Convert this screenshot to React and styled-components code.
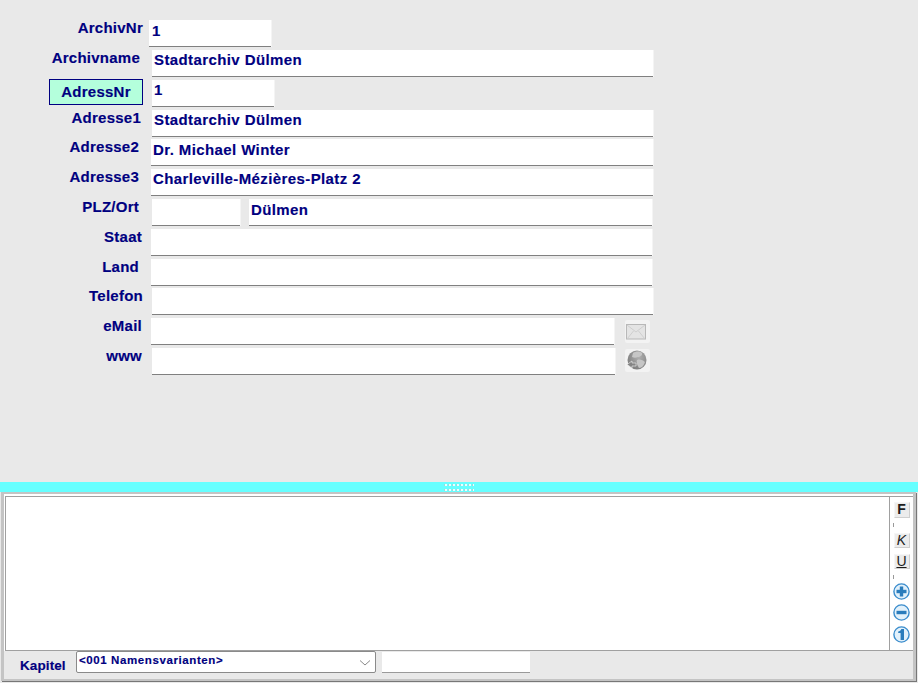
import React from 'react';
import styled, { createGlobalStyle } from 'styled-components';

const Global = createGlobalStyle`
  html, body { margin: 0; padding: 0; background: #e9e9e9; }
  * { box-sizing: border-box; }
`;
const Page = styled.div`
  width: 918px; height: 683px; display: flex; flex-direction: column; overflow: hidden;
  background: #e9e9e9; color: #000080;
  font-family: "Liberation Sans", Arial, sans-serif; font-weight: 700; font-size: 15px; letter-spacing: .25px;
  -webkit-text-stroke: .15px #000080;
`;
const Form = styled.div`
  height: 482px; padding-top: 20px; display: flex; flex-direction: column;
`;
const Row = styled.div`
  display: flex; height: ${p => p.$h}px; flex: none;
`;
const LabelCell = styled.div`
  flex: none; width: ${p => p.$left}px; padding-top: ${p => p.$pt}px;
  text-align: right; line-height: 16px; white-space: nowrap;
`;
const ActiveLabel = styled.div`
  flex: none; width: 94px; height: 26px; margin-left: 49px; margin-right: 9px;
  margin-top: -1px; padding-bottom: 1px; border: 1px solid #000080; background: #b4ffdc;
  display: flex; align-items: center; justify-content: center;
`;
const Field = styled.div`
  flex: none; width: ${p => p.$w}px; height: 27px; margin-left: ${p => p.$ml || 0}px;
  background: #fff; border-bottom: 1px solid #808080; box-shadow: 1px 0 0 #f4f4f4;
  padding: ${p => p.$pt ?? 2}px 0 0 ${p => p.$pl ?? 2}px; line-height: 18px; white-space: nowrap; letter-spacing: .4px;
`;
const IconButton = styled.div`
  flex: none; width: 25px; height: 23px; margin-left: ${p => p.$ml}px; margin-top: ${p => p.$mt}px;
  background: #f3f3f3; border-radius: 2px; display: flex; align-items: center; padding-left: 1px;
`;
const Splitter = styled.div`
  height: 10px; flex: none; background: #66ffff; display: flex; align-items: center; justify-content: center;
`;
const Lower = styled.div`
  height: 189px; flex: none; margin: 0 2px 2px 1px; display: flex; flex-direction: column;
  border: 3px solid #c4c4c4; border-top-width: 2px; border-bottom-width: 2px; background: #e9e9e9;
  box-shadow: 1px 1px 0 #777;
`;
const EditorFrame = styled.div`
  height: 157px; flex: none; display: flex; background: #fff;
  padding: 2px 0 0 1px;
`;
const EditorInner = styled.div`
  flex: 1; display: flex; background: #fff;
  border-top: 1px solid #a0a0a0; border-left: 1px solid #a0a0a0; border-bottom: 1px solid #a0a0a0;
`;
const Editor = styled.div`
  flex: 1; background: #fff;
`;
const Tools = styled.div`
  width: 24px; flex: none; border-left: 1px solid #a0a0a0; background: #fff;
  display: flex; flex-direction: column; align-items: center; padding-top: 5px;
  -webkit-text-stroke: 0;
`;
const FormatButton = styled.div`
  width: 16px; height: ${p => p.$h}px; flex: none; background: #ececec;
  border: 1px solid #f6f6f6; border-bottom-color: #cfcfcf; border-right-color: #cfcfcf;
  color: #1c1c1c; font-size: 14px; line-height: 13px; text-align: center; letter-spacing: 0;
  font-weight: ${p => p.$weight || 400}; font-style: ${p => p.$italic ? 'italic' : 'normal'};
  text-decoration: ${p => p.$underline ? 'underline' : 'none'};
  margin-top: ${p => p.$mt || 0}px;
`;
const Tick = styled.div`
  width: 1px; height: 4px; background: #999; margin-top: ${p => p.$mt}px; align-self: flex-start; margin-left: 3px; flex: none;
`;
const RoundIcon = styled.svg`
  display: block; width: 17px; height: 17px; flex: none; margin-top: ${p => p.$mt}px;
`;
const Footer = styled.div`
  flex: 1; display: flex; align-items: flex-start;
`;
const FooterLabel = styled.div`
  width: 72px; flex: none; padding: 7px 0 0 16px; font-size: 13.5px; line-height: 16px; letter-spacing: .1px;
`;
const SelectBox = styled.div`
  width: 300px; height: 22px; flex: none; background: #fff; border: 1px solid #8a8a8a; border-radius: 2px;
  display: flex; justify-content: space-between; font-size: 11.5px; letter-spacing: .6px; padding: 2px 4px 0 2px; line-height: 13px;
`;
const PlainBox = styled.div`
  width: 148px; height: 21px; flex: none; margin-left: 6px; margin-top: 1px; background: #fff; border-bottom: 1px solid #9a9a9a;
`;

const Round = ({ kind, mt }) => (
  <RoundIcon $mt={mt} viewBox="0 0 17 17">
    <circle cx="8.5" cy="8.5" r="7.6" fill="#e2f1fb" stroke="#3a8ccc" strokeWidth="1.4" />
    {kind !== 'one' && <rect x="3.5" y="6.8" width="10" height="3.4" fill="#2a7cbc" />}
    {kind === 'plus' && <rect x="6.8" y="3.5" width="3.4" height="10" fill="#2a7cbc" />}
    {kind === 'one' && <path d="M8.4 3h2.6v11H7.6V7H5.2V5.6C6.6 5.4 7.8 4.4 8.4 3Z" fill="#2a7cbc" />}
  </RoundIcon>
);

const Grip = () => (
  <svg width="30" height="10" viewBox="0 0 30 10">
    {[0, 1].map(r => Array.from({ length: 8 }, (_, i) => (
      <g key={`${r}-${i}`}>
        <rect x={i * 4} y={2 + r * 5} width="3" height="2" fill="#a0d8d8" />
        <rect x={1 + i * 4} y={2 + r * 5} width="2" height="2" fill="#eaffff" />
      </g>
    )))}
  </svg>
);

const rows = [
  { h: 30, label: 'ArchivNr', left: 143, pt: -1, ml: 6, w: 122, v: '1', pl: 3 },
  { h: 30, label: 'Archivname', left: 140, pt: -1, ml: 12, w: 501, v: 'Stadtarchiv Dülmen', pt2: 1 },
  { h: 30, active: true, ml: 0, w: 122, v: '1', pl: 2, pt2: 1 },
  { h: 29, label: 'Adresse1', left: 141, pt: 0, ml: 11, w: 501, v: 'Stadtarchiv Dülmen', pt2: 1 },
  { h: 30, label: 'Adresse2', left: 139, pt: 0, ml: 12, w: 502, v: 'Dr. Michael Winter' },
  { h: 30, label: 'Adresse3', left: 139, pt: 0, ml: 12, w: 502, v: 'Charleville-Mézières-Platz 2', pt2: 1 },
  { h: 30, plz: true, label: 'PLZ/Ort', left: 139, pt: 0 },
  { h: 30, label: 'Staat', left: 142, pt: 0, ml: 9, w: 501 },
  { h: 29, label: 'Land', left: 139, pt: 0, ml: 12, w: 501 },
  { h: 30, label: 'Telefon', left: 143, pt: 0, ml: 9, w: 501 },
  { h: 30, label: 'eMail', left: 142, pt: 0, ml: 9, w: 463, icon: 'mail' },
  { h: 30, label: 'www', left: 142, pt: 0, ml: 10, w: 463, icon: 'web' },
];

const MailIcon = () => (
  <svg width="20" height="16" viewBox="0 0 20 16">
    <rect x=".5" y=".5" width="19" height="14.5" fill="#e4e4e4" stroke="#b8b8b8" />
    <path d="M1 1l9 7 9-7M1 15l6.5-8M19 15l-6.5-8" fill="none" stroke="#cfcfcf" />
  </svg>
);
const WebIcon = () => (
  <svg width="21" height="21" viewBox="0 0 21 21">
    <defs>
      <radialGradient id="globeShade" cx=".6" cy=".35" r=".7">
        <stop offset="0" stopColor="#b0b0b0" />
        <stop offset="1" stopColor="#7c7c7c" />
      </radialGradient>
    </defs>
    <circle cx="11" cy="10" r="9.5" fill="url(#globeShade)" />
    <path d="M7 3c3-2 7-2 9 0 1 2-2 4-4 4-2 1-4 1-6 0ZM11 10c3-1 6 0 8 2-1 3-3 6-6 6-1-2-3-5-2-8Z" fill="#c6c6c6" />
    <path d="M1 14.5l5-3.5v2h4v3H6v2Z" fill="#858585" stroke="#f3f3f3" strokeWidth=".6" />
  </svg>
);

export default function App() {
  return (
    <Page>
      <Global />
      <Form>
        {rows.map((r, i) => (
          <Row key={i} $h={r.h}>
            {r.active ? <ActiveLabel>AdressNr</ActiveLabel> : (
              <LabelCell $left={r.left} $pt={r.pt}>{r.label}</LabelCell>
            )}
            {r.plz ? (
              <>
                <Field $w={88} $ml={13} />
                <Field $w={403} $ml={9} $pl={2}>Dülmen</Field>
              </>
            ) : (
              <Field $w={r.w} $ml={r.ml} $pl={r.pl} $pt={r.pt2}>{r.v}</Field>
            )}
            {r.icon && (
              <IconButton $ml={r.icon === 'mail' ? 11 : 10} $mt={r.icon === 'mail' ? 2 : 1}>
                {r.icon === 'mail' ? <MailIcon /> : <WebIcon />}
              </IconButton>
            )}
          </Row>
        ))}
      </Form>
      <Splitter><Grip /></Splitter>
      <Lower>
        <EditorFrame>
          <EditorInner>
            <Editor />
            <Tools>
              <FormatButton $h={16} $weight={700}>F</FormatButton>
              <Tick $mt={5} />
              <FormatButton $h={15} $italic $mt={6}>K</FormatButton>
              <FormatButton $h={15} $underline $mt={6}>U</FormatButton>
              <Tick $mt={6} />
              <Round kind="plus" mt={4} />
              <Round kind="minus" mt={4} />
              <Round kind="one" mt={5} />
            </Tools>
          </EditorInner>
        </EditorFrame>
        <Footer>
          <FooterLabel>Kapitel</FooterLabel>
          <SelectBox>
            <span>&lt;001 Namensvarianten&gt;</span>
            <svg width="12" height="20" viewBox="0 0 12 20"><path d="M1 6.5l5 4.5 5-4.5" fill="none" stroke="#8a8a8a" /></svg>
          </SelectBox>
          <PlainBox />
        </Footer>
      </Lower>
    </Page>
  );
}
